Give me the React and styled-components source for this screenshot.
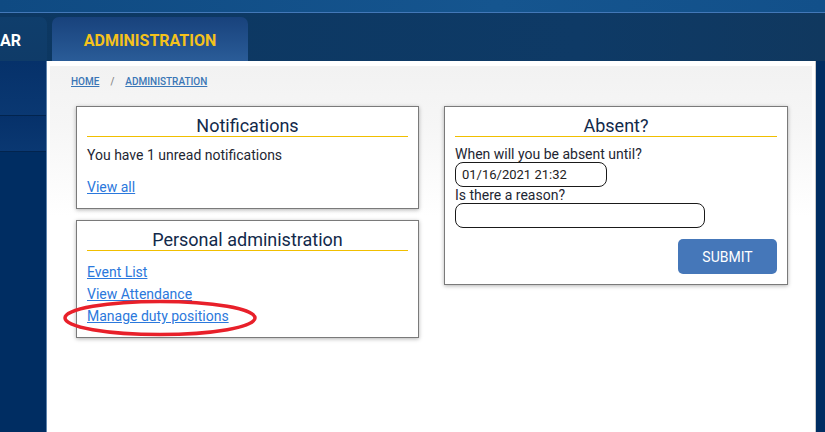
import React from 'react';
import styled, { createGlobalStyle } from 'styled-components';

const GlobalStyle = createGlobalStyle`
  body {
    margin: 0;
    font-family: Roboto, "Liberation Sans", sans-serif;
    background: #0d3862;
  }
`;

const Page = styled.div`
  width: 825px;
  height: 432px;
  overflow: hidden;
  display: flex;
  flex-direction: column;
  background: #0d3862;
`;

const TopBand = styled.div`
  height: 12px;
  flex-shrink: 0;
  background: linear-gradient(90deg, #0f4a82, #15558f 60%, #12508a);
  border-bottom: 1px solid #4378b8;
`;

const NavBar = styled.nav`
  height: 48px;
  flex-shrink: 0;
  display: flex;
  align-items: flex-end;
  gap: 5px;
  background: linear-gradient(90deg, #0c3761, #0e3a66 70%, #10385f);
`;

const Tab = styled.div`
  height: 44px;
  width: ${(p) => p.$width}px;
  display: flex;
  align-items: center;
  justify-content: ${(p) => (p.$active ? 'center' : 'flex-start')};
  box-sizing: border-box;
  border-radius: ${(p) => (p.$active ? '7px 7px 0 0' : '0 7px 0 0')};
  background: ${(p) =>
    p.$active
      ? 'linear-gradient(180deg, #18427c, #2a5c98)'
      : 'linear-gradient(180deg, #0f3e6c, #0f3b68)'};
  color: ${(p) => (p.$active ? '#f4c21c' : '#ffffff')};
  font-size: 16px;
  font-weight: 700;
  white-space: nowrap;

  span {
    padding-top: 2px;
  }
`;

const Body = styled.div`
  flex: 1;
  display: flex;
  min-height: 0;
`;

const Sidebar = styled.aside`
  width: 46px;
  flex-shrink: 0;
  background: #002d62;
  border-right: 1px solid #5f84ad;
  display: flex;
  flex-direction: column;
`;

const SideItem = styled.div`
  height: ${(p) => p.$height}px;
  background: linear-gradient(180deg, #06316a, #0a3872);
  border-bottom: 1px solid #02244e;
`;

const Main = styled.main`
  width: 768px;
  flex-shrink: 0;
  background: #ffffff;
  padding: 5px 3px 0;
  box-sizing: border-box;
`;

const RightStrip = styled.div`
  flex: 1;
  background: #002d62;
  border-left: 1px solid #c9c9c9;
`;

const Inner = styled.div`
  height: 100%;
  background: linear-gradient(180deg, #f2f2f2 0px, #f6f6f6 60px, #ffffff 150px);
  padding: 10px 21px;
  box-sizing: border-box;
`;

const Breadcrumb = styled.div`
  display: flex;
  align-items: center;
  gap: 11px;
  font-size: 10px;
  font-weight: 500;
  line-height: 12px;
  color: #3a76b6;

  a {
    color: inherit;
    text-decoration: underline;
  }
`;

const Sep = styled.span`
  color: #8a8a8a;
`;

const Grid = styled.div`
  display: grid;
  grid-template-columns: 343px 344px;
  gap: 25px;
  margin: 18px 0 0 5px;
  align-items: start;
`;

const Column = styled.div`
  display: flex;
  flex-direction: column;
  gap: 11px;
`;

const Card = styled.section`
  background: #ffffff;
  border: 1px solid #7a7a7a;
  box-shadow: 0 1px 4px rgba(0, 0, 0, 0.3);
  padding: 0 10px ${(p) => p.$pb}px;
`;

const CardTitle = styled.h2`
  margin: 0;
  padding-top: 9px;
  font-size: 18px;
  font-weight: 400;
  line-height: 20px;
  text-align: center;
  color: #12294a;
  border-bottom: 1px solid #f1bf00;
`;

const Text = styled.p`
  margin: ${(p) => p.$mt || 0}px 0 0;
  font-size: 14px;
  line-height: ${(p) => p.$lh || 18}px;
  color: #1e2633;
`;

const LinkList = styled.div`
  display: flex;
  flex-direction: column;
  margin-top: ${(p) => p.$mt || 0}px;
`;

const Link = styled.a`
  position: relative;
  align-self: flex-start;
  font-size: 14px;
  line-height: ${(p) => p.$lh || 18}px;
  color: #2b78dc;
  text-decoration: underline;
  cursor: pointer;
`;

const Marker = styled.svg`
  position: absolute;
  left: -24px;
  top: -7px;
  width: 196px;
  height: 40px;
  pointer-events: none;
  overflow: visible;
`;

const Label = styled.label`
  display: block;
  margin-top: ${(p) => p.$mt || 0}px;
  font-size: 14px;
  line-height: 16px;
  color: #1e2633;
`;

const Input = styled.input`
  display: block;
  width: ${(p) => p.$width}px;
  height: 25px;
  box-sizing: border-box;
  border: 1px solid #1a1a1a;
  border-radius: 8px;
  padding: 0 6px;
  font-family: Roboto, "Liberation Sans", sans-serif;
  font-size: 13px;
  color: #222;
  background: #fff;
  outline: none;
`;

const Actions = styled.div`
  display: flex;
  justify-content: flex-end;
  margin-top: 11px;
`;

const Button = styled.button`
  width: 99px;
  height: 35px;
  border: none;
  border-radius: 5px;
  background: #4577b9;
  color: #ffffff;
  font-family: Roboto, "Liberation Sans", sans-serif;
  font-size: 14px;
  cursor: pointer;
`;

const App = () => {
  return (
    <>
      <GlobalStyle />
      <Page>
        <TopBand />
        <NavBar>
          <Tab $width={47}>
            <span>AR</span>
          </Tab>
          <Tab $width={196} $active>
            <span>ADMINISTRATION</span>
          </Tab>
        </NavBar>
        <Body>
          <Sidebar>
            <SideItem $height={54} />
            <SideItem $height={35} />
          </Sidebar>
          <Main>
            <Inner>
              <Breadcrumb>
                <a>HOME</a>
                <Sep>/</Sep>
                <a>ADMINISTRATION</a>
              </Breadcrumb>
              <Grid>
                <Column>
                  <Card $pb={12}>
                    <CardTitle>Notifications</CardTitle>
                    <Text $mt={9}>You have 1 unread notifications</Text>
                    <LinkList $mt={14}>
                      <Link>View all</Link>
                    </LinkList>
                  </Card>
                  <Card $pb={10}>
                    <CardTitle>Personal administration</CardTitle>
                    <LinkList $mt={10}>
                      <Link $lh={22}>Event List</Link>
                      <Link $lh={22}>View Attendance</Link>
                      <Link $lh={22}>
                        Manage duty positions
                        <Marker viewBox="0 0 196 40">
                          <ellipse
                            cx="97"
                            cy="20"
                            rx="95"
                            ry="16.5"
                            fill="none"
                            stroke="#e8202a"
                            strokeWidth="3.5"
                          />
                        </Marker>
                      </Link>
                    </LinkList>
                  </Card>
                </Column>
                <Card $pb={10}>
                  <CardTitle>Absent?</CardTitle>
                  <Label $mt={9}>When will you be absent until?</Label>
                  <Input $width={152} defaultValue="01/16/2021 21:32" />
                  <Label>Is there a reason?</Label>
                  <Input $width={250} />
                  <Actions>
                    <Button>SUBMIT</Button>
                  </Actions>
                </Card>
              </Grid>
            </Inner>
          </Main>
          <RightStrip />
        </Body>
      </Page>
    </>
  );
};

export default App;
